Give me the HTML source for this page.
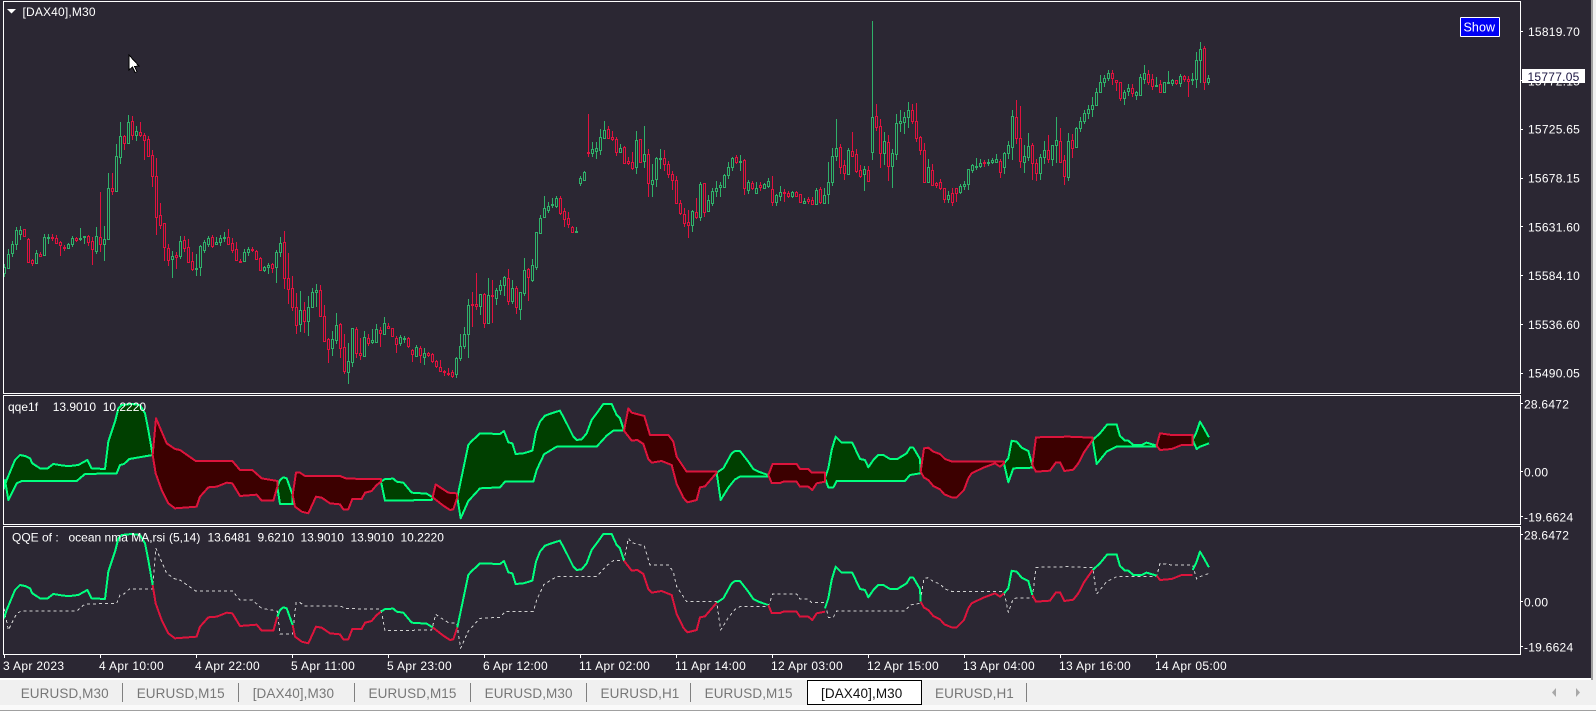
<!DOCTYPE html>
<html><head><meta charset="utf-8"><title>[DAX40],M30</title>
<style>
html,body{margin:0;padding:0;width:1596px;height:711px;overflow:hidden;background:#f0f0f0}
svg{display:block;position:absolute;left:0;top:0}
text{font-family:"Liberation Sans",Arial,sans-serif;font-size:12px;fill:#fff;white-space:pre}
.p{letter-spacing:.25px}
.t{letter-spacing:.33px}
.tab{font-size:13.5px;letter-spacing:.1px;fill:#777}
</style></head><body>
<svg width="1596" height="711" viewBox="0 0 1596 711" xmlns="http://www.w3.org/2000/svg">
<rect x="0" y="0" width="1596" height="711" fill="#f0f0f0"/>
<rect x="0" y="0" width="1591" height="678" fill="#2b2733"/>
<rect x="1591" y="0" width="2" height="680" fill="#a0a0a0"/>

<g shape-rendering="crispEdges" fill="none">
<!-- wicks -->
<path stroke="#2fb069" d="M4.5 264V277M8.5 249V268M12.5 241V257M16.5 227V250M20.5 226V240M36.5 250V263M44.5 234V256M48.5 234V244M68.5 243V249M72.5 236V247M80.5 228V241M84.5 236V244M96.5 227V254M104.5 226V261M108.5 173V240M116.5 144V191M120.5 122V164M128.5 115V143M136.5 126V141M172.5 251V278M180.5 236V259M196.5 254V276M200.5 245V276M204.5 240V253M208.5 236V247M216.5 237V245M220.5 235V246M224.5 232V242M244.5 249V262M248.5 247V256M264.5 266V272M268.5 263V274M276.5 250V283M280.5 237V257M300.5 291V332M308.5 296V336M312.5 288V307M316.5 284V307M332.5 331V356M336.5 313V344M348.5 343V384M352.5 328V367M364.5 331V357M372.5 329V344M376.5 324V343M384.5 317V334M400.5 335V346M404.5 336V343M416.5 345V357M424.5 348V365M456.5 357V378M460.5 334V361M464.5 327V349M468.5 299V358M480.5 294V315M488.5 278V324M496.5 288V305M500.5 280V295M504.5 276V296M512.5 280V304M520.5 292V320M524.5 258V296M532.5 259V282M536.5 232V270M540.5 215V234M544.5 196V218M548.5 202V213M552.5 198V208M556.5 196V208M576.5 227V233M580.5 176V186M584.5 171V181M592.5 142V157M596.5 142V159M600.5 129V155M604.5 121V138M620.5 144V153M636.5 131V174M644.5 126V168M652.5 164V197M656.5 157V187M660.5 149V169M692.5 210V232M700.5 182V221M708.5 195V212M712.5 188V206M716.5 181V197M720.5 182V197M724.5 174V188M728.5 162V179M732.5 157V171M740.5 155V171M748.5 180V194M756.5 182V194M764.5 183V189M768.5 178V188M776.5 194V206M780.5 186V201M792.5 191V198M804.5 198V204M816.5 188V205M824.5 188V204M828.5 162V204M832.5 148V186M836.5 119V161M848.5 148V175M864.5 166V191M872.5 21V160M884.5 132V165M892.5 149V188M896.5 114V160M900.5 110V132M904.5 112V134M908.5 102V128M928.5 159V182M948.5 191V203M960.5 184V194M964.5 181V190M968.5 169V190M972.5 164V173M976.5 158V170M980.5 159V168M988.5 159V166M992.5 158V164M996.5 154V163M1004.5 152V174M1008.5 141V159M1012.5 110V160M1024.5 145V173M1028.5 133V161M1040.5 154V180M1044.5 141V164M1052.5 145V166M1056.5 117V163M1068.5 133V181M1076.5 127V148M1080.5 117V132M1084.5 110V124M1088.5 105V119M1092.5 97V117M1096.5 88V105M1100.5 75V93M1104.5 75V87M1108.5 70V81M1124.5 90V105M1128.5 84V96M1136.5 91V100M1140.5 74V95M1144.5 65V84M1156.5 77V87M1164.5 82V93M1168.5 71V84M1172.5 79V86M1180.5 74V87M1192.5 73V85M1196.5 52V88M1200.5 42V83M1208.5 75V85"/>
<path stroke="#e0123e" d="M24.5 229V237M28.5 238V262M32.5 259V266M40.5 252V257M52.5 234V241M56.5 235V244M60.5 241V256M64.5 245V251M76.5 237V242M88.5 235V246M92.5 237V265M100.5 192V252M112.5 173V195M124.5 135V150M132.5 116V140M140.5 122V137M144.5 133V160M148.5 136V157M152.5 150V187M156.5 158V235M160.5 203V229M164.5 223V261M168.5 244V266M176.5 252V269M184.5 236V252M188.5 239V262M192.5 252V271M212.5 235V248M228.5 229V245M232.5 238V253M236.5 242V261M240.5 259V262M252.5 247V252M256.5 250V259M260.5 257V271M272.5 263V273M284.5 231V289M288.5 253V304M292.5 276V311M296.5 293V334M304.5 302V333M320.5 285V317M324.5 305V342M328.5 338V363M340.5 323V358M344.5 334V374M356.5 327V358M360.5 338V360M368.5 334V346M380.5 327V347M388.5 323V329M392.5 328V336M396.5 336V353M408.5 337V348M412.5 349V362M420.5 346V363M428.5 352V357M432.5 353V363M436.5 360V368M440.5 360V372M444.5 370V376M448.5 368V376M452.5 370V378M472.5 292V327M476.5 273V310M484.5 293V328M492.5 280V323M508.5 269V305M516.5 286V314M528.5 268V301M560.5 196V215M564.5 208V227M568.5 212V228M572.5 226V233M588.5 114V157M608.5 126V139M612.5 131V141M616.5 137V156M624.5 146V163M628.5 157V165M632.5 152V170M640.5 139V162M648.5 149V197M664.5 150V171M668.5 161V178M672.5 171V190M676.5 176V204M680.5 200V215M684.5 208V227M688.5 210V238M696.5 198V219M704.5 183V217M736.5 155V164M744.5 159V195M752.5 181V190M760.5 182V191M772.5 176V206M784.5 189V202M788.5 191V198M796.5 191V197M800.5 194V202M808.5 197V204M812.5 197V205M820.5 187V204M840.5 144V174M844.5 160V180M852.5 132V157M856.5 149V173M860.5 165V178M868.5 166V181M876.5 104V131M880.5 119V168M888.5 135V181M912.5 104V124M916.5 103V142M920.5 136V155M924.5 143V182M932.5 164V186M936.5 182V188M940.5 179V190M944.5 188V203M952.5 188V206M956.5 188V202M984.5 160V167M1000.5 159V178M1016.5 100V144M1020.5 106V168M1032.5 143V180M1036.5 159V181M1048.5 135V163M1060.5 128V163M1064.5 155V185M1072.5 134V158M1112.5 70V85M1116.5 80V91M1120.5 82V101M1132.5 84V97M1148.5 70V85M1152.5 74V90M1160.5 80V92M1176.5 80V85M1184.5 75V82M1188.5 76V97M1204.5 46V90"/>
<!-- bodies -->
<path stroke="#2fb069" fill="#2b2733" d="M3.5 267.5h2v6h-2zM7.5 254.5h2v14h-2zM11.5 244.5h2v9h-2zM15.5 230.5h2v14h-2zM19.5 230.5h2v4h-2zM35.5 253.5h2v10h-2zM43.5 237.5h2v18h-2zM47.5 237.5h2v1h-2zM67.5 244.5h2v4h-2zM71.5 238.5h2v6h-2zM79.5 238.5h2v1h-2zM83.5 236.5h2v1h-2zM95.5 236.5h2v15h-2zM103.5 239.5h2v5h-2zM107.5 188.5h2v51h-2zM115.5 156.5h2v35h-2zM119.5 136.5h2v21h-2zM127.5 122.5h2v21h-2zM135.5 131.5h2v4h-2zM171.5 256.5h2v3h-2zM179.5 241.5h2v15h-2zM195.5 268.5h2v1h-2zM199.5 246.5h2v21h-2zM203.5 242.5h2v8h-2zM207.5 238.5h2v6h-2zM215.5 242.5h2v2h-2zM219.5 238.5h2v4h-2zM223.5 237.5h2v1h-2zM243.5 252.5h2v9h-2zM247.5 249.5h2v3h-2zM263.5 267.5h2v3h-2zM267.5 265.5h2v2h-2zM275.5 252.5h2v15h-2zM279.5 243.5h2v9h-2zM299.5 310.5h2v14h-2zM307.5 307.5h2v14h-2zM311.5 292.5h2v15h-2zM315.5 290.5h2v2h-2zM331.5 339.5h2v9h-2zM335.5 325.5h2v15h-2zM347.5 361.5h2v11h-2zM351.5 328.5h2v34h-2zM363.5 337.5h2v19h-2zM371.5 340.5h2v2h-2zM375.5 329.5h2v13h-2zM383.5 323.5h2v11h-2zM399.5 337.5h2v6h-2zM403.5 338.5h2v1h-2zM415.5 347.5h2v9h-2zM423.5 353.5h2v4h-2zM455.5 358.5h2v16h-2zM459.5 346.5h2v12h-2zM463.5 334.5h2v12h-2zM467.5 305.5h2v29h-2zM479.5 294.5h2v12h-2zM487.5 295.5h2v28h-2zM495.5 290.5h2v8h-2zM499.5 285.5h2v5h-2zM503.5 277.5h2v8h-2zM511.5 288.5h2v13h-2zM519.5 292.5h2v17h-2zM523.5 270.5h2v23h-2zM531.5 265.5h2v15h-2zM535.5 232.5h2v35h-2zM539.5 218.5h2v15h-2zM543.5 208.5h2v9h-2zM547.5 206.5h2v4h-2zM551.5 204.5h2v1h-2zM555.5 198.5h2v8h-2zM575.5 231.5h2v1h-2zM579.5 178.5h2v5h-2zM583.5 172.5h2v8h-2zM591.5 149.5h2v4h-2zM595.5 148.5h2v3h-2zM599.5 137.5h2v13h-2zM603.5 130.5h2v8h-2zM619.5 148.5h2v4h-2zM635.5 140.5h2v27h-2zM643.5 154.5h2v7h-2zM651.5 180.5h2v4h-2zM655.5 158.5h2v21h-2zM659.5 158.5h2v1h-2zM691.5 211.5h2v14h-2zM699.5 184.5h2v33h-2zM707.5 200.5h2v11h-2zM711.5 191.5h2v12h-2zM715.5 188.5h2v3h-2zM719.5 185.5h2v2h-2zM723.5 175.5h2v12h-2zM727.5 167.5h2v8h-2zM731.5 158.5h2v9h-2zM739.5 161.5h2v1h-2zM747.5 182.5h2v8h-2zM755.5 188.5h2v5h-2zM763.5 184.5h2v4h-2zM767.5 181.5h2v5h-2zM775.5 195.5h2v7h-2zM779.5 192.5h2v4h-2zM791.5 192.5h2v4h-2zM803.5 201.5h2v2h-2zM815.5 190.5h2v14h-2zM823.5 195.5h2v8h-2zM827.5 182.5h2v12h-2zM831.5 156.5h2v26h-2zM835.5 148.5h2v8h-2zM847.5 150.5h2v24h-2zM863.5 169.5h2v5h-2zM871.5 117.5h2v35h-2zM883.5 141.5h2v12h-2zM891.5 153.5h2v13h-2zM895.5 123.5h2v31h-2zM899.5 121.5h2v2h-2zM903.5 117.5h2v5h-2zM907.5 110.5h2v7h-2zM927.5 167.5h2v15h-2zM947.5 195.5h2v4h-2zM959.5 186.5h2v6h-2zM963.5 184.5h2v2h-2zM967.5 169.5h2v15h-2zM971.5 165.5h2v5h-2zM975.5 166.5h2v1h-2zM979.5 163.5h2v3h-2zM987.5 162.5h2v1h-2zM991.5 160.5h2v2h-2zM995.5 159.5h2v3h-2zM1003.5 153.5h2v14h-2zM1007.5 145.5h2v8h-2zM1011.5 116.5h2v31h-2zM1023.5 156.5h2v6h-2zM1027.5 146.5h2v11h-2zM1039.5 157.5h2v16h-2zM1043.5 150.5h2v7h-2zM1051.5 145.5h2v14h-2zM1055.5 140.5h2v5h-2zM1067.5 141.5h2v36h-2zM1075.5 128.5h2v19h-2zM1079.5 121.5h2v7h-2zM1083.5 113.5h2v8h-2zM1087.5 109.5h2v4h-2zM1091.5 105.5h2v4h-2zM1095.5 92.5h2v13h-2zM1099.5 82.5h2v10h-2zM1103.5 78.5h2v4h-2zM1107.5 73.5h2v5h-2zM1123.5 92.5h2v6h-2zM1127.5 88.5h2v3h-2zM1135.5 92.5h2v3h-2zM1139.5 77.5h2v18h-2zM1143.5 73.5h2v6h-2zM1155.5 85.5h2v1h-2zM1163.5 82.5h2v10h-2zM1167.5 82.5h2v1h-2zM1171.5 80.5h2v3h-2zM1179.5 76.5h2v7h-2zM1191.5 79.5h2v1h-2zM1195.5 60.5h2v19h-2zM1199.5 49.5h2v11h-2zM1207.5 78.5h2v4h-2z"/>
<path stroke="#e0123e" fill="#2b2733" d="M23.5 229.5h2v7h-2zM27.5 239.5h2v23h-2zM31.5 260.5h2v3h-2zM39.5 254.5h2v2h-2zM51.5 237.5h2v1h-2zM55.5 238.5h2v5h-2zM59.5 242.5h2v3h-2zM63.5 247.5h2v1h-2zM75.5 238.5h2v2h-2zM87.5 236.5h2v6h-2zM91.5 241.5h2v8h-2zM99.5 237.5h2v7h-2zM111.5 188.5h2v3h-2zM123.5 136.5h2v7h-2zM131.5 121.5h2v14h-2zM139.5 132.5h2v3h-2zM143.5 135.5h2v5h-2zM147.5 139.5h2v17h-2zM151.5 155.5h2v21h-2zM155.5 176.5h2v41h-2zM159.5 215.5h2v10h-2zM163.5 223.5h2v24h-2zM167.5 248.5h2v12h-2zM175.5 255.5h2v2h-2zM183.5 240.5h2v8h-2zM187.5 247.5h2v15h-2zM191.5 261.5h2v8h-2zM211.5 237.5h2v9h-2zM227.5 237.5h2v7h-2zM231.5 243.5h2v7h-2zM235.5 249.5h2v11h-2zM239.5 261.5h2v1h-2zM251.5 249.5h2v1h-2zM255.5 251.5h2v8h-2zM259.5 258.5h2v12h-2zM271.5 264.5h2v4h-2zM283.5 242.5h2v36h-2zM287.5 278.5h2v11h-2zM291.5 288.5h2v19h-2zM295.5 307.5h2v18h-2zM303.5 310.5h2v11h-2zM319.5 290.5h2v26h-2zM323.5 316.5h2v25h-2zM327.5 339.5h2v10h-2zM339.5 324.5h2v24h-2zM343.5 347.5h2v24h-2zM355.5 329.5h2v24h-2zM359.5 353.5h2v2h-2zM367.5 338.5h2v5h-2zM379.5 330.5h2v3h-2zM387.5 326.5h2v2h-2zM391.5 328.5h2v8h-2zM395.5 338.5h2v6h-2zM407.5 338.5h2v8h-2zM411.5 350.5h2v4h-2zM419.5 348.5h2v7h-2zM427.5 353.5h2v2h-2zM431.5 354.5h2v7h-2zM435.5 361.5h2v5h-2zM439.5 367.5h2v4h-2zM443.5 371.5h2v1h-2zM447.5 373.5h2v1h-2zM451.5 372.5h2v4h-2zM471.5 304.5h2v1h-2zM475.5 304.5h2v2h-2zM483.5 294.5h2v29h-2zM491.5 295.5h2v1h-2zM507.5 278.5h2v23h-2zM515.5 288.5h2v19h-2zM527.5 269.5h2v8h-2zM559.5 198.5h2v15h-2zM563.5 211.5h2v8h-2zM567.5 218.5h2v6h-2zM571.5 227.5h2v5h-2zM587.5 152.5h2v1h-2zM607.5 129.5h2v9h-2zM611.5 137.5h2v2h-2zM615.5 139.5h2v13h-2zM623.5 147.5h2v16h-2zM627.5 161.5h2v2h-2zM631.5 162.5h2v6h-2zM639.5 139.5h2v23h-2zM647.5 154.5h2v29h-2zM663.5 158.5h2v6h-2zM667.5 164.5h2v10h-2zM671.5 174.5h2v6h-2zM675.5 180.5h2v23h-2zM679.5 203.5h2v10h-2zM683.5 214.5h2v9h-2zM687.5 222.5h2v3h-2zM695.5 212.5h2v5h-2zM703.5 183.5h2v29h-2zM735.5 157.5h2v5h-2zM743.5 160.5h2v28h-2zM751.5 183.5h2v5h-2zM759.5 185.5h2v2h-2zM771.5 189.5h2v13h-2zM783.5 192.5h2v1h-2zM787.5 193.5h2v3h-2zM795.5 192.5h2v4h-2zM799.5 194.5h2v8h-2zM807.5 199.5h2v2h-2zM811.5 200.5h2v4h-2zM819.5 189.5h2v13h-2zM839.5 147.5h2v20h-2zM843.5 165.5h2v8h-2zM851.5 151.5h2v5h-2zM855.5 154.5h2v17h-2zM859.5 170.5h2v6h-2zM867.5 170.5h2v11h-2zM875.5 116.5h2v11h-2zM879.5 126.5h2v27h-2zM887.5 142.5h2v24h-2zM911.5 110.5h2v11h-2zM915.5 121.5h2v17h-2zM919.5 137.5h2v13h-2zM923.5 150.5h2v32h-2zM931.5 170.5h2v15h-2zM935.5 183.5h2v2h-2zM939.5 182.5h2v6h-2zM943.5 188.5h2v11h-2zM951.5 193.5h2v9h-2zM955.5 188.5h2v5h-2zM983.5 162.5h2v1h-2zM999.5 161.5h2v11h-2zM1015.5 117.5h2v21h-2zM1019.5 138.5h2v23h-2zM1031.5 145.5h2v18h-2zM1035.5 163.5h2v10h-2zM1047.5 150.5h2v9h-2zM1059.5 141.5h2v21h-2zM1063.5 160.5h2v16h-2zM1071.5 140.5h2v8h-2zM1111.5 73.5h2v5h-2zM1115.5 80.5h2v2h-2zM1119.5 82.5h2v16h-2zM1131.5 88.5h2v5h-2zM1147.5 74.5h2v8h-2zM1151.5 79.5h2v7h-2zM1159.5 84.5h2v8h-2zM1175.5 80.5h2v3h-2zM1183.5 76.5h2v3h-2zM1187.5 79.5h2v2h-2zM1203.5 48.5h2v34h-2z"/>
</g>

<!-- indicator 1 -->
<g transform="translate(0,380) scale(.33333)" shape-rendering="crispEdges" stroke-linejoin="round" stroke-width="6">
<g fill="#003f00" stroke="#00ff7f">
<polygon points="12,325 20,300 45,240 60,225 75,228 90,235 97,250 120,265 143,265 160,252 190,257 210,258 235,255 262,240 275,265 315,267 325,185 345,125 355,85 365,75 395,72 420,75 435,100 445,150 458,225 388,237 372,252 360,255 350,280 255,282 230,303 65,303 50,310 25,360 15,300"/>
<polygon points="832,320 840,300 850,292 860,295 878,345 878,372 840,372"/>
<polygon points="1143,305 1155,297 1180,296 1190,305 1210,308 1235,338 1280,341 1298,352 1295,360 1155,362"/>
<polygon points="1372,352 1405,195 1415,183 1430,170 1440,160 1500,162 1512,153 1525,187 1537,190 1547,222 1570,220 1597,212 1608,155 1620,125 1635,107 1660,98 1680,92 1700,130 1720,170 1730,180 1745,178 1760,160 1775,120 1790,100 1810,72 1835,72 1850,105 1860,115 1872,152 1840,152 1820,167 1790,200 1670,200 1632,223 1610,270 1600,305 1515,305 1500,322 1440,325 1405,363 1382,415"/>
<polygon points="2150,278 2170,265 2195,220 2205,213 2220,213 2245,245 2260,267 2275,275 2305,285 2305,290 2220,290 2205,298 2185,323 2162,360"/>
<polygon points="2475,295 2485,265 2495,210 2507,170 2525,188 2557,188 2580,237 2595,240 2605,262 2620,240 2635,225 2650,225 2670,237 2692,237 2720,220 2730,203 2740,203 2760,237 2762,275 2760,280 2730,285 2715,303 2510,303 2500,322 2485,322"/>
<polygon points="3012,250 3025,235 3035,182 3050,185 3065,203 3085,213 3097,255 3097,263 3040,265 3025,307"/>
<polygon points="3278,180 3300,160 3322,133 3350,133 3360,168 3375,182 3385,182 3400,195 3425,195 3440,188 3470,197 3470,200 3350,200 3320,215 3290,252"/>
<path d="M3578,180 3590,155 3600,125 3612,145 3627,172 3627,190 3600,200 3590,207Z" stroke="none"/>
<path fill="none" d="M3578,180 3590,155 3600,125 3612,145 3627,172M3627,190 3600,200 3590,207 3578,180"/>
</g>
<g fill="#3c0000" stroke="#dc143c">
<polygon points="458,225 467,280 485,330 505,370 525,385 590,380 600,350 625,322 650,320 680,308 697,310 720,348 770,344 785,362 820,362 832,320 832,303 785,295 757,270 720,270 697,243 587,243 540,210 525,207 500,190 468,115"/>
<polygon points="878,345 885,380 905,395 925,400 948,350 965,353 990,370 1020,373 1030,388 1045,388 1057,357 1085,357 1095,338 1115,333 1130,315 1143,305 1143,297 1040,296 1020,288 915,288 900,278 888,278"/>
<polygon points="1298,352 1330,377 1350,390 1360,388 1372,352 1370,340 1345,338 1325,325 1307,313"/>
<polygon points="1872,152 1895,182 1912,180 1930,192 1945,237 1955,248 1985,243 2015,255 2030,312 2050,353 2062,367 2090,360 2100,322 2115,319 2150,278 2150,275 2060,275 2030,230 2020,185 2005,165 1950,165 1933,108 1895,98 1885,85"/>
<polygon points="2305,285 2315,309 2340,309 2350,305 2390,305 2400,320 2425,320 2437,330 2450,310 2475,305 2475,278 2435,278 2425,267 2400,267 2390,252 2318,252"/>
<polygon points="2762,275 2772,293 2785,300 2800,318 2820,328 2833,343 2855,352 2870,352 2892,330 2905,295 2915,280 2950,263 2985,250 3000,260 3012,250 3012,245 2857,245 2835,237 2820,222 2800,215 2785,203 2772,205"/>
<polygon points="3097,255 3108,275 3150,272 3168,247 3180,247 3193,273 3220,269 3235,250 3252,217 3278,180 3278,173 3205,170 3108,172"/>
<polygon points="3470,197 3480,210 3515,207 3545,195 3578,195 3578,165 3515,165 3480,160"/>
</g>
</g>

<!-- indicator 2 -->
<g transform="translate(0,510) scale(.33333)" shape-rendering="crispEdges" stroke-linejoin="round" fill="none">
<polyline stroke="#cfcfcf" stroke-width="3" stroke-dasharray="9 9" points="12,295 25,360 50,310 65,303 230,303 255,282 350,280 360,255 372,252 388,237 458,237 468,115 500,190 525,207 540,210 587,243 697,243 720,270 757,270 785,295 832,303 840,372 878,372 888,278 900,278 915,288 1020,288 1040,296 1143,297 1155,362 1295,360 1307,313 1325,325 1345,338 1370,340 1382,415 1405,363 1440,325 1500,322 1515,305 1600,305 1610,270 1632,223 1670,200 1790,200 1820,167 1840,152 1872,152 1885,85 1895,98 1933,108 1950,165 2005,165 2020,185 2030,230 2060,275 2150,275 2162,360 2185,323 2205,298 2220,290 2305,290 2318,252 2390,252 2400,267 2425,267 2435,278 2475,278 2485,322 2500,322 2510,303 2715,303 2730,285 2760,280 2772,205 2785,203 2800,215 2820,222 2835,237 2857,245 3012,245 3025,307 3040,265 3097,263 3108,172 3205,170 3278,173 3290,252 3320,215 3350,200 3470,200 3480,160 3515,165 3578,165 3590,207 3600,200 3627,190"/>
<path stroke="#00ff7f" stroke-width="6" d="M12,325 20,300 45,240 60,225 75,228 90,235 97,250 120,265 143,265 160,252 190,257 210,258 235,255 262,240 275,265 315,267 325,185 345,125 355,85 365,75 395,72 420,75 435,100 445,150 458,225M832,320 840,300 850,292 860,295 878,345M1143,305 1155,297 1180,296 1190,305 1210,308 1235,338 1280,341 1298,352M1372,352 1405,195 1415,183 1430,170 1440,160 1500,162 1512,153 1525,187 1537,190 1547,222 1570,220 1597,212 1608,155 1620,125 1635,107 1660,98 1680,92 1700,130 1720,170 1730,180 1745,178 1760,160 1775,120 1790,100 1810,72 1835,72 1850,105 1860,115 1872,152M2150,278 2170,265 2195,220 2205,213 2220,213 2245,245 2260,267 2275,275 2305,285M2475,295 2485,265 2495,210 2507,170 2525,188 2557,188 2580,237 2595,240 2605,262 2620,240 2635,225 2650,225 2670,237 2692,237 2720,220 2730,203 2740,203 2760,237 2762,275M3012,250 3025,235 3035,182 3050,185 3065,203 3085,213 3097,255M3278,180 3300,160 3322,133 3350,133 3360,168 3375,182 3385,182 3400,195 3425,195 3440,188 3470,197M3578,180 3590,155 3600,125 3612,145 3627,172"/>
<path stroke="#dc143c" stroke-width="6" d="M458,225 467,280 485,330 505,370 525,385 590,380 600,350 625,322 650,320 680,308 697,310 720,348 770,344 785,362 820,362 832,320M878,345 885,380 905,395 925,400 948,350 965,353 990,370 1020,373 1030,388 1045,388 1057,357 1085,357 1095,338 1115,333 1130,315 1143,305M1298,352 1330,377 1350,390 1360,388 1372,352M1872,152 1895,182 1912,180 1930,192 1945,237 1955,248 1985,243 2015,255 2030,312 2050,353 2062,367 2090,360 2100,322 2115,319 2150,278M2305,285 2315,309 2340,309 2350,305 2390,305 2400,320 2425,320 2437,330 2450,310 2475,305M2762,275 2772,293 2785,300 2800,318 2820,328 2833,343 2855,352 2870,352 2892,330 2905,295 2915,280 2950,263 2985,250 3000,260 3012,250M3097,255 3108,275 3150,272 3168,247 3180,247 3193,273 3220,269 3235,250 3252,217 3278,180M3470,197 3480,210 3515,207 3545,195 3578,195"/>
</g>

<!-- panel borders and ticks -->
<g shape-rendering="crispEdges" fill="none" stroke="#fff">
<path d="M3.5 1.5H1520.5V393.5H3.5Z"/>
<path d="M3.5 395.5H1520.5V524.5H3.5Z"/>
<path d="M3.5 526.5H1520.5V654.5H3.5Z"/>
<path d="M1521 31.5h2M1521 80.5h2M1521 129.5h2M1521 178.5h2M1521 226.5h2M1521 275.5h2M1521 324.5h2M1521 373.5h2M1521 403.5h2M1521 471.5h2M1521 516.5h2M1521 534.5h2M1521 601.5h2M1521 646.5h2"/>
<path d="M4.5 655v3M100.5 655v3M196.5 655v3M292.5 655v3M388.5 655v3M484.5 655v3M580.5 655v3M676.5 655v3M772.5 655v3M868.5 655v3M964.5 655v3M1060.5 655v3M1156.5 655v3"/>
</g>

<!-- top-left -->
<polygon points="7,9 16,9 11.5,13.5" fill="#fff"/>
<text x="22.5" y="16" textLength="73">[DAX40],M30</text>

<!-- cursor -->
<path d="M129 55V70L132.5 67 135 72.5 137 71.5 134.5 66.5 139 66Z" fill="#fff" stroke="#000" stroke-width="1" shape-rendering="crispEdges"/>

<!-- show button -->
<rect x="1460.5" y="17.5" width="39" height="19" rx="1" fill="#0000f4" stroke="#fff" shape-rendering="crispEdges"/>
<text x="1463.5" y="31.5" style="font-size:12.5px" textLength="31.5">Show</text>

<!-- indicator labels -->
<text y="411"><tspan x="8">qqe1f</tspan><tspan x="52.7">13.9010</tspan><tspan x="102.7">10.2220</tspan></text>
<text y="541.5"><tspan x="12">QQE of :</tspan><tspan x="68.5">ocean nma MA,rsi</tspan><tspan x="169">(5,14)</tspan><tspan x="207.5">13.6481</tspan><tspan x="257.5">9.6210</tspan><tspan x="300.5">13.9010</tspan><tspan x="350.5">13.9010</tspan><tspan x="400.5">10.2220</tspan></text>

<!-- price axis -->
<text class="p" x="1528" y="36">15819.70</text>
<text class="p" x="1528" y="85.5">15772.15</text>
<text class="p" x="1528" y="133.5">15725.65</text>
<text class="p" x="1528" y="182.5">15678.15</text>
<text class="p" x="1528" y="231.5">15631.60</text>
<text class="p" x="1528" y="280">15584.10</text>
<text class="p" x="1528" y="329">15536.60</text>
<text class="p" x="1528" y="377.5">15490.05</text>
<rect x="1522" y="69" width="63" height="14" fill="#fff"/>
<text class="p" x="1527.5" y="81" style="fill:#1a1440">15777.05</text>

<text class="p" x="1524" y="408.5">28.6472</text>
<text class="p" x="1524" y="476.5">0.00</text>
<text class="p" x="1524" y="521.5">-19.6624</text>
<text class="p" x="1524" y="539.5">28.6472</text>
<text class="p" x="1524" y="606.5">0.00</text>
<text class="p" x="1524" y="651.5">-19.6624</text>

<!-- time axis -->
<text class="t" x="3" y="670">3 Apr 2023</text>
<text class="t" x="99" y="670">4 Apr 10:00</text>
<text class="t" x="195" y="670">4 Apr 22:00</text>
<text class="t" x="291" y="670">5 Apr 11:00</text>
<text class="t" x="387" y="670">5 Apr 23:00</text>
<text class="t" x="483" y="670">6 Apr 12:00</text>
<text class="t" x="579" y="670">11 Apr 02:00</text>
<text class="t" x="675" y="670">11 Apr 14:00</text>
<text class="t" x="771" y="670">12 Apr 03:00</text>
<text class="t" x="867" y="670">12 Apr 15:00</text>
<text class="t" x="963" y="670">13 Apr 04:00</text>
<text class="t" x="1059" y="670">13 Apr 16:00</text>
<text class="t" x="1155" y="670">14 Apr 05:00</text>

<!-- tab bar -->
<rect x="0" y="678" width="1591" height="2" fill="#fff"/>
<rect x="0" y="705" width="1596" height="5" fill="#fafafa"/>
<rect x="0" y="710" width="1596" height="1" fill="#a0a0a0"/>
<g fill="#808080" shape-rendering="crispEdges">
<rect x="122" y="683" width="1" height="19"/><rect x="238" y="683" width="1" height="19"/><rect x="354" y="683" width="1" height="19"/><rect x="470" y="683" width="1" height="19"/><rect x="586" y="683" width="1" height="19"/><rect x="690" y="683" width="1" height="19"/><rect x="1026" y="683" width="1" height="19"/>
</g>
<rect x="807.5" y="680.5" width="114" height="24" fill="#fff" stroke="#000" shape-rendering="crispEdges"/>
<text class="tab" x="20.7" y="698">EURUSD,M30</text>
<text class="tab" x="136.7" y="698">EURUSD,M15</text>
<text class="tab" x="252.7" y="698">[DAX40],M30</text>
<text class="tab" x="368.5" y="698">EURUSD,M15</text>
<text class="tab" x="484.6" y="698">EURUSD,M30</text>
<text class="tab" x="600.5" y="698">EURUSD,H1</text>
<text class="tab" x="704.6" y="698">EURUSD,M15</text>
<text class="tab" x="821" y="698" style="fill:#111">[DAX40],M30</text>
<text class="tab" x="935" y="698">EURUSD,H1</text>
<polygon points="1556,688 1552,692.5 1556,697" fill="#a8a8a8"/>
<polygon points="1576,688 1580,692.5 1576,697" fill="#a8a8a8"/>
</svg>
</body></html>
